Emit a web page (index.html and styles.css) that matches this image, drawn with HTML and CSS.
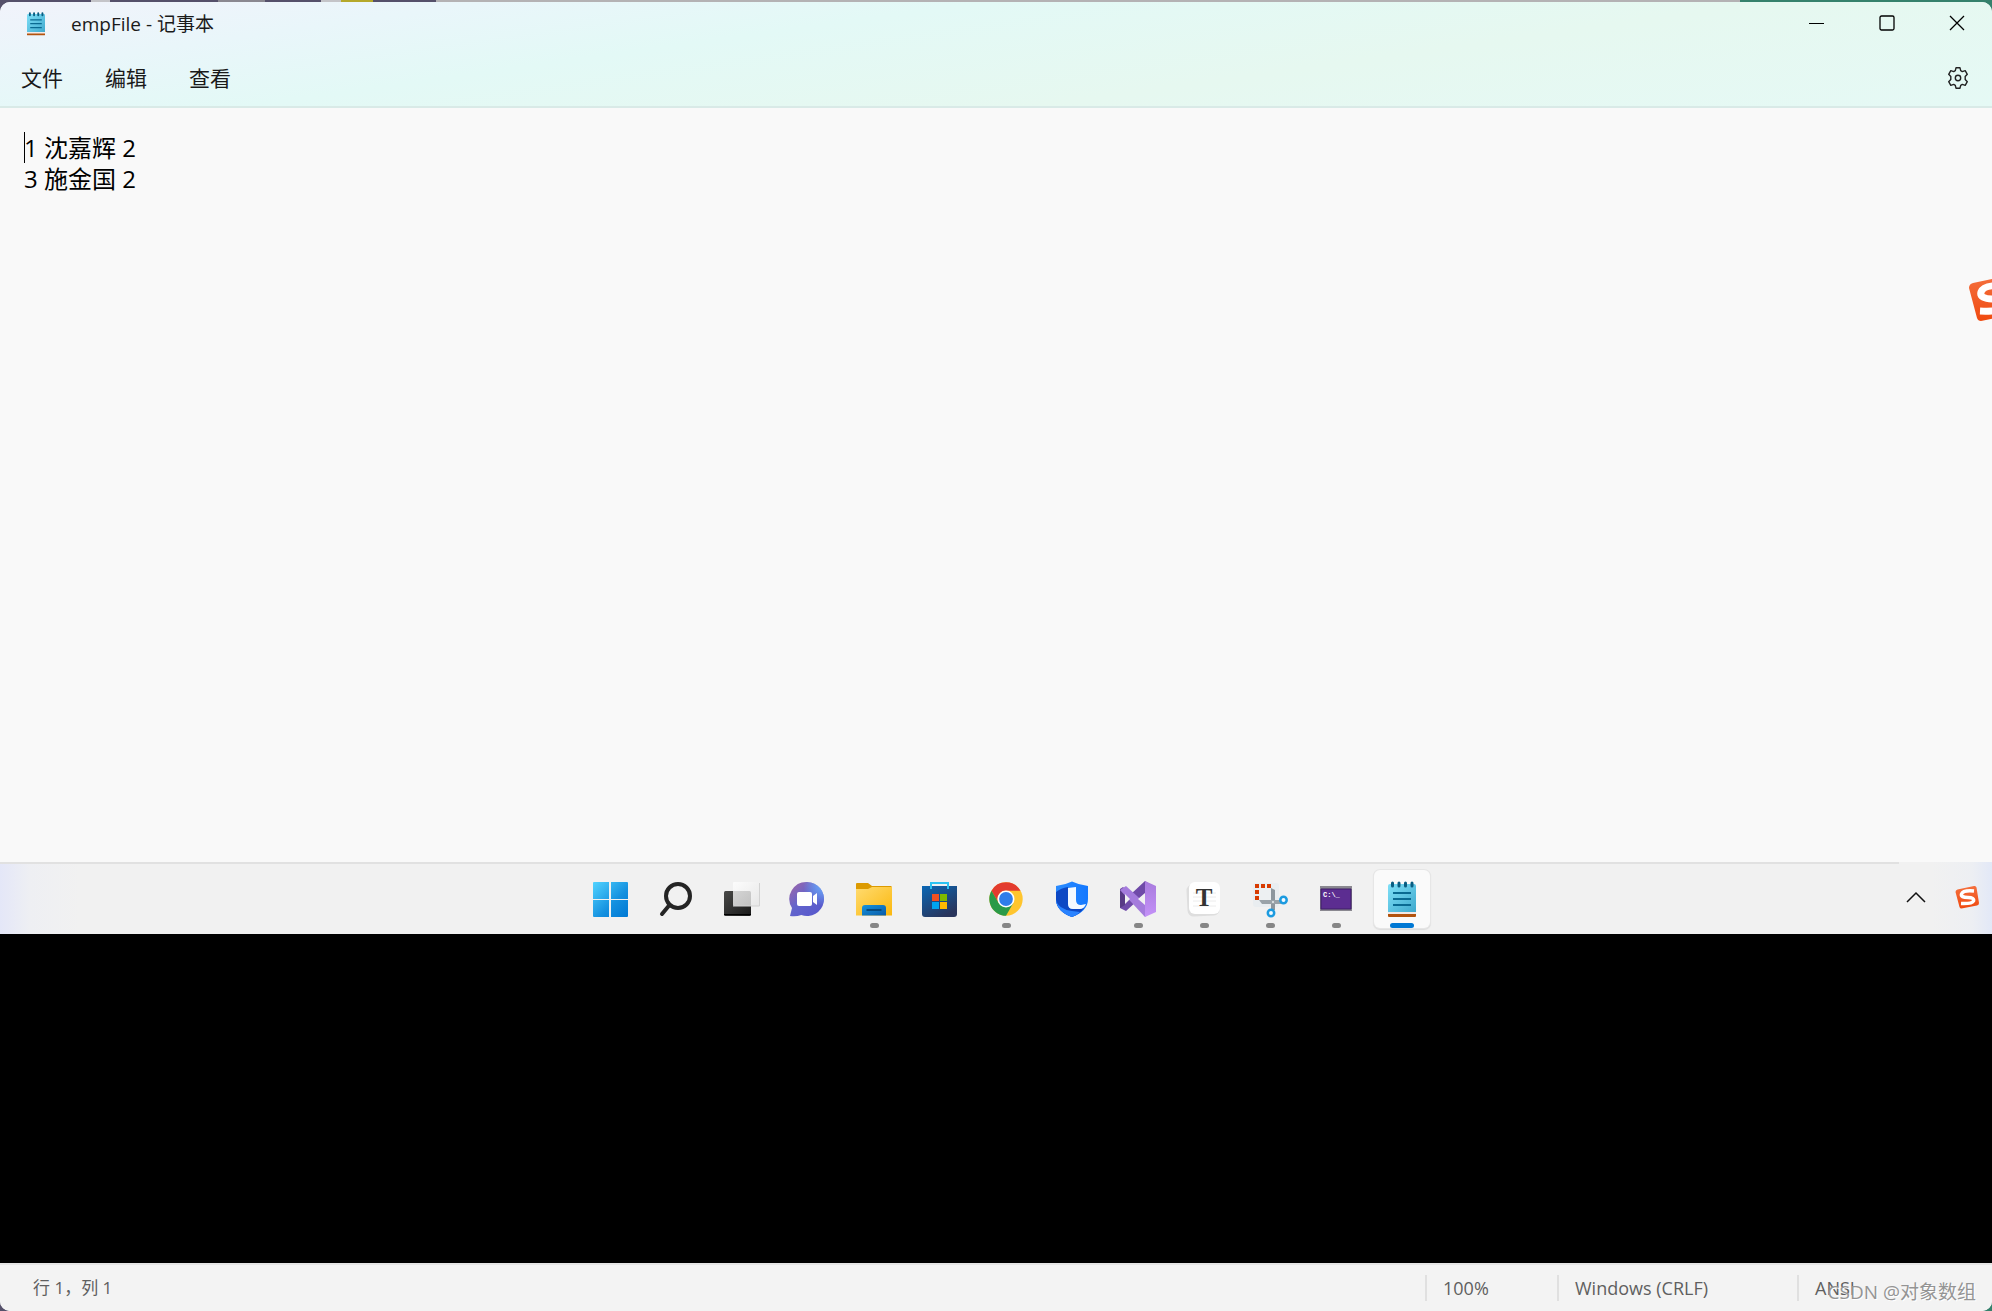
FILE: index.html
```html
<!DOCTYPE html>
<html lang="zh-CN">
<head>
<meta charset="utf-8">
<meta name="viewport" content="width=device-width, initial-scale=1">
<title>empFile - 记事本</title>
<link rel="stylesheet" href="styles.css">
</head>
<body>
<svg class="defs" aria-hidden="true">
  <defs>
    <linearGradient id="win" x1="0" y1="0" x2="1" y2="1"><stop offset="0" stop-color="#51d3ff"/><stop offset=".6" stop-color="#1490df"/><stop offset="1" stop-color="#0078d4"/></linearGradient>
    <linearGradient id="dark" x1="0" y1="0" x2="1" y2="1"><stop offset="0" stop-color="#4a4a48"/><stop offset="1" stop-color="#181818"/></linearGradient>
    <linearGradient id="glass" x1="0" y1="0" x2="1" y2="1"><stop offset="0" stop-color="#fff"/><stop offset="1" stop-color="#e4e4e4"/></linearGradient>
    <linearGradient id="chat" x1="0" y1="0" x2="1" y2="1"><stop offset="0" stop-color="#a467a6"/><stop offset=".45" stop-color="#6264cc"/><stop offset="1" stop-color="#5555cc"/></linearGradient>
    <radialGradient id="chatglow" cx="1" cy=".1" r=".6"><stop offset="0" stop-color="#6bb0ff"/><stop offset="1" stop-color="#6bb0ff" stop-opacity="0"/></radialGradient>
    <linearGradient id="folder" x1="0" y1="0" x2="1" y2="1"><stop offset="0" stop-color="#ffdb70"/><stop offset="1" stop-color="#fbb80e"/></linearGradient>
    <linearGradient id="blue" x1="0" y1="0" x2="1" y2="1"><stop offset="0" stop-color="#1593dd"/><stop offset="1" stop-color="#0a5ba8"/></linearGradient>
    <linearGradient id="bag" x1="0" y1="0" x2=".6" y2="1"><stop offset="0" stop-color="#0a67b5"/><stop offset="1" stop-color="#29355c"/></linearGradient>
    <linearGradient id="shield" x1="0" y1="0" x2="1" y2="0"><stop offset="0" stop-color="#2b8cff"/><stop offset="1" stop-color="#1478ff"/></linearGradient>
    <linearGradient id="vs" x1="0" y1="0" x2="0" y2="1"><stop offset="0" stop-color="#a87bdd"/><stop offset="1" stop-color="#c491f8"/></linearGradient>
    <linearGradient id="pad" x1="0" y1="0" x2="1" y2="1"><stop offset="0" stop-color="#7fe0f8"/><stop offset="1" stop-color="#3fa9cd"/></linearGradient>
    <linearGradient id="orange" x1="0" y1="0" x2="0" y2="1"><stop offset="0" stop-color="#f4703e"/><stop offset="1" stop-color="#f04a10"/></linearGradient>
    <symbol id="notepad" viewBox="0 0 40 40">
      <path d="M6 32h28v5q0 1-1 1H7q-1 0-1-1z" fill="#b3530e"/>
      <path d="M6 31h28v4H6z" fill="#f2e9e6"/>
      <path d="M6 7q0-2 2-2h24q2 0 2 2v26H6z" fill="url(#pad)"/>
      <path d="M11 14h18M11 20h18M11 26h18" stroke="#0a6a92" stroke-width="2"/>
      <path d="M10.500 4v3M17 4v3M23.500 4v3M30 4v3" stroke="#0a5d82" stroke-width="3" stroke-linecap="round"/>
    </symbol>
    <symbol id="sogou" viewBox="0 0 48 48">
      <path d="M5 9L38 2q4-1 5 3l5 31q0 4-4 5l-31 6q-3 0-4-3L1 14q0-4 4-5z" fill="url(#orange)"/>
      <path d="M38 12Q16 10 13 18q-2 7 13 7q13 0 11 7q-3 6-25 5" fill="none" stroke="#fff" stroke-width="7"/>
    </symbol>
  </defs>
</svg>

<div class="backdrop"></div>
<main class="window">
  <header class="chrome">
    <div class="titlebar">
      <svg class="app-icon" viewBox="6 2 28 37" preserveAspectRatio="none" aria-hidden="true"><use href="#notepad" width="40" height="40"/></svg>
      <h1 class="title">empFile - 记事本</h1>
      <div class="controls">
        <button aria-label="最小化"><svg width="16" height="16"><path d="M0 8.500h15" stroke="#000"/></svg></button>
        <button aria-label="最大化"><svg width="16" height="16"><rect x="1" y="1" width="14" height="14" rx="1.500" fill="none" stroke="#000" stroke-width="1.300"/></svg></button>
        <button aria-label="关闭"><svg width="16" height="16"><path d="M1 1l14 14M15 1L1 15" stroke="#000" stroke-width="1.300"/></svg></button>
      </div>
    </div>
    <nav class="menubar">
      <button>文件</button>
      <button>编辑</button>
      <button>查看</button>
      <button class="settings" aria-label="设置">
        <svg width="22" height="22" viewBox="0 0 22 22" fill="none" stroke="#222" stroke-width="1.400" stroke-linejoin="round"><circle cx="11" cy="11" r="2.700"/><path d="M9 .8h4l.7 2.900 1.600.9 2.900-.9 2.100 3.600L18.200 9.500v3l2.100 2.200-2.100 3.600-2.900-.9-1.600.9-.7 2.900H9l-.7-2.900-1.600-.9-2.900.9-2.100-3.600 2.100-2.200v-3L1.700 7.300l2.100-3.600 2.900.9 1.600-.9z"/></svg>
      </button>
    </nav>
  </header>

  <section class="editor">
    <textarea aria-label="文本编辑器" spellcheck="false">1 沈嘉辉 2
3 施金国 2</textarea>
    <span class="caret"></span>
    <svg class="ime-float" aria-hidden="true"><use href="#sogou"/></svg>
  </section>

  <section class="taskbar" aria-label="任务栏">
    <div class="apps">
      <button aria-label="开始"><svg viewBox="0 0 40 40"><path d="M4 3h15v17H3V4q0-1 1-1zM21 3h16q1 0 1 1v16H21zM3 21h16v17H4q-1 0-1-1zM21 21h17v16q0 1-1 1H21z" fill="url(#win)"/></svg></button>
      <button aria-label="搜索"><svg viewBox="0 0 40 40" fill="none" stroke="#242424" stroke-width="4"><circle cx="22" cy="17" r="12"/><path d="M13.500 26L6 35" stroke-linecap="round"/></svg></button>
      <button aria-label="任务视图"><svg viewBox="0 0 40 40"><rect x="2" y="12" width="27" height="25" rx="1.500" fill="url(#dark)"/><path d="M2 35.500h27" stroke="#000"/><rect x="11" y="3" width="27" height="24" rx="1" fill="url(#glass)" opacity=".8"/><path d="M11 27h26.500V4" fill="none" stroke="#d2d2d2"/></svg></button>
      <button aria-label="聊天"><svg viewBox="0 0 40 40"><path d="M19.300 3a17 17 0 1 1-6 33Q8 38 2 37l2-8A17 17 0 0 1 19.300 3z" fill="url(#chat)"/><path d="M19.300 3a17 17 0 1 1-6 33Q8 38 2 37l2-8A17 17 0 0 1 19.300 3z" fill="url(#chatglow)"/><rect x="9" y="13" width="15" height="14" rx="2" fill="#fff"/><path d="M25 17l4-3v12l-4-3z" fill="#fff"/></svg></button>
      <button class="running" aria-label="文件资源管理器"><svg viewBox="0 0 40 40"><path d="M2 5q0-1 1-1h11l4 3h19l1 1v6H2z" fill="#dc9a00"/><path d="M2 10h12l4-2h20v28.500H2z" fill="url(#folder)"/><path d="M8 36.500V29q0-3 3-3h18q3 0 3 3v7.500z" fill="url(#blue)"/><path d="M12.500 31h15" stroke="#064a80" stroke-width="2"/></svg></button>
      <button aria-label="应用商店"><svg viewBox="0 0 40 40"><path d="M2 7h35v28q0 3-3 3H5q-3 0-3-3z" fill="url(#bag)"/><path d="M11 10V4h17v6" fill="none" stroke="#2cc3f2" stroke-width="2"/><path d="M12 15h7v7h-7z" fill="#f25022"/><path d="M20 15h7v7h-7z" fill="#7fba00"/><path d="M12 23h7v7h-7z" fill="#00a4ef"/><path d="M20 23h7v7h-7z" fill="#ffb900"/></svg></button>
      <button class="running" aria-label="Chrome"><svg viewBox="0 0 40 40"><circle cx="20" cy="20" r="16.700" fill="#ffc52e"/><path d="M5.500 11.700A16.700 16.700 0 0 1 34.500 11.700H20A8.300 8.300 0 0 0 12.500 24z" fill="#e33b2e"/><path d="M5.500 11.700A16.700 16.700 0 0 0 20 36.700L27.200 24.200 12.800 24.200z" fill="#2a9a48"/><circle cx="20" cy="20" r="8.500" fill="#fff"/><circle cx="20" cy="20" r="6.900" fill="#2f7de9"/></svg></button>
      <button aria-label="电脑管家"><svg viewBox="0 0 40 40"><path d="M20 2.500Q27 6 36 7v13q0 12-16 18Q4 32 4 20V7q9-1 16-4.500z" fill="url(#shield)"/><path d="M4 13q5-4 12-5v17q0 5 5 5l11-1q-4 6-12 9Q4 32 4 20z" fill="#0d48c4"/><path d="M4 21q2 9 16 11l8 1q-3 3-8 5Q5 33 4 21z" fill="#2a83ff"/><path d="M16 9l8-1v13q0 5 5 5l5-1q-2 5-6 5h-7q-5 0-5-5z" fill="#f4f9ff"/></svg></button>
      <button class="running" aria-label="Visual Studio"><svg viewBox="0 0 40 40"><path d="M2 10l3-2 8 7L27 2l3 2v8L8 32l-6-3z" fill="#6f4aa8"/><path d="M2 10l5 3v13l-5 3z" fill="#583a85"/><path d="M2 11l6-4 22 20v8l-3 3z" fill="#a47bdc"/><path d="M27 2l11 5v26l-11 5z" fill="url(#vs)"/><path d="M27 14v12l-7-6zM7 15v10l5-5z" fill="#f1f1f1"/></svg></button>
      <button class="running" aria-label="Typora"><svg viewBox="0 0 40 40"><rect x="3" y="5" width="32" height="32" rx="6" fill="#dedede" transform="rotate(-3 19 21)"/><rect x="5" y="3" width="31" height="32" rx="6" fill="#fff"/><path d="M9 14h23M9 18h23M9 22h23M9 27h23" stroke="#ececec"/><text class="typora" x="20" y="27" text-anchor="middle">T</text></svg></button>
      <button class="running" aria-label="截图工具"><svg viewBox="0 0 40 40"><rect x="3" y="4" width="26" height="24" rx="3" fill="#e9edf0"/><path d="M21 9l4 2v20h-4z" fill="#8d969d"/><path d="M9 21h22v4H12z" fill="#9aa2a8"/><rect x="9" y="9" width="12" height="12" fill="#edf0f2"/><path d="M5 5h4v4H5zM11 5h4v4h-4zM17 5h4v4h-4zM5 11h4v4H5zM5 17h4v4H5z" fill="#d83b01"/><circle cx="23" cy="23" r="1" fill="#e8ecef"/><g fill="#f4faff" stroke="#1c9be0" stroke-width="2.500"><circle cx="33.500" cy="21" r="3.200"/><circle cx="21" cy="34" r="3.200"/></g></svg></button>
      <button class="running" aria-label="命令提示符"><svg viewBox="0 0 40 40"><path d="M4 7h32v25H4z" fill="#8a8890"/><path d="M5 10h30v20H5z" fill="#5c2d91" stroke="#3e1f66"/><text class="prompt" x="7" y="18">C:\_</text></svg></button>
      <button class="running active" aria-label="记事本"><svg viewBox="0 0 40 40"><use href="#notepad"/></svg></button>
    </div>
    <div class="tray">
      <button aria-label="显示隐藏的图标"><svg width="20" height="12" fill="none" stroke="#111" stroke-width="1.500"><path d="M1 11l9-9 9 9"/></svg></button>
      <button aria-label="输入法"><svg width="24" height="24"><use href="#sogou"/></svg></button>
    </div>
  </section>

  <div class="void"></div>

  <footer class="status">
    <span class="position">行 1，列 1</span>
    <span class="cell zoom">100%</span>
    <span class="cell eol">Windows (CRLF)</span>
    <span class="cell encoding">ANSI</span>
    <span class="watermark">CSDN @对象数组</span>
  </footer>
</main>
</body>
</html>
```
FILE: styles.css
```css
* { box-sizing: border-box; }

body {
  margin: 0;
  min-height: 100vh;
  display: flex;
  flex-direction: column;
  background: linear-gradient(90deg, #55506a 0 87%, #35816c 87%);
  font-family: "Open Sans", "Noto Sans CJK SC", sans-serif;
  color: #1a1a1a;
}

button {
  border: 0;
  padding: 0;
  background: none;
  font: inherit;
  color: inherit;
  display: flex;
  align-items: center;
  justify-content: center;
}

.defs { position: absolute; width: 0; height: 0; }

.backdrop {
  height: 2px;
  background: linear-gradient(90deg,
    #55506a 0 91px, #c4c4c8 91px 110px, #55506a 110px 218px,
    #8a8890 218px 265px, #55506a 265px 321px, #c4c4c8 321px 341px,
    #b5a82a 341px 373px, #55506a 373px 436px, #b4b2b4 436px 1740px,
    #35816c 1740px);
}

.window {
  flex: 1;
  display: flex;
  flex-direction: column;
  border-radius: 10px;
  overflow: hidden;
  background: #f9f9f9;
}

.chrome {
  border-bottom: 2px solid #d9eae7;
  background: linear-gradient(172deg, #f1f3fb 0%, #e9f6fa 18%, #e3f9f6 36%, #e6f8f0 65%, #e5f9f5 100%);
}

.titlebar {
  display: flex;
  align-items: center;
  height: 44px;
  margin-bottom: 4px;
  padding-left: 27px;
}
.app-icon { width: 18px; height: 24px; }
.title {
  margin: 0 0 0 26px;
  font-size: 19px;
  font-weight: 400;
  line-height: 24px;
}
.controls { display: flex; margin-left: auto; align-self: flex-start; }
.controls button { width: 70px; height: 41px; }

.menubar { display: flex; height: 56px; }
.menubar button { padding: 0 21px; font-size: 21px; line-height: 30px; }
.menubar .settings { margin-left: auto; padding: 0 23px; }

.editor { position: relative; flex: 754 1 0; display: flex; overflow: hidden; }
.editor textarea {
  flex: 1;
  border: 0;
  outline: 0;
  resize: none;
  padding: 24px;
  background: transparent;
  font: 24px/31px "Open Sans", "Noto Sans CJK SC", sans-serif;
  color: #000;
}
.caret { position: absolute; left: 24px; top: 24px; width: 1px; height: 31px; background: #000; }
.ime-float { position: absolute; right: -24px; top: 166px; width: 48px; height: 48px; }

.taskbar {
  display: grid;
  grid-template-columns: 1fr auto 1fr;
  align-items: center;
  height: 72px;
  padding-top: 2px;
  background:
    linear-gradient(#e1e1e1, #e1e1e1) 0 0 / calc(100% - 93px) 2px no-repeat,
    linear-gradient(90deg, #e4e7f8 0, #eeeff3 30px, #f1f1f1 80px calc(100% - 60px), #edeff3 calc(100% - 20px), #e2e8f7 100%);
}
.apps { grid-column: 2; display: flex; gap: 10px; margin-left: 20px; }
.apps button { position: relative; width: 56px; height: 58px; border-radius: 6px; }
.apps svg { width: 40px; height: 40px; }
.apps .active { background: #fafafa; box-shadow: 0 0 0 1px #e6e6e6, 0 1px 1px 1px #dcdcdc; }
.apps .running::after {
  content: "";
  position: absolute;
  bottom: 0;
  left: 24px;
  width: 9px;
  height: 5px;
  border-radius: 3px;
  background: #868686;
}
.apps .active::after { left: 16px; width: 24px; background: #0078d4; }
.typora { font: 700 25px "Liberation Serif", serif; fill: #333; }
.prompt { font: 700 7px "Liberation Mono", monospace; fill: #fff; }

.tray { grid-column: 3; justify-self: end; display: flex; gap: 29px; padding: 0 13px 4px 0; }

.void { flex: 329 1 0; background: #000; }

.status {
  position: relative;
  display: flex;
  align-items: center;
  height: 48px;
  padding-left: 33px;
  border-top: 2px solid #e5e5e5;
  background: #f3f3f3;
  font-size: 18px;
  line-height: 26px;
  color: #5f5f5f;
}
.position { flex: 1; font-size: 17px; }
.cell { border-left: 2px solid #e0e0e0; padding-left: 16px; }
.zoom { width: 132px; }
.eol { width: 240px; }
.encoding { width: 195px; }
.watermark {
  position: absolute;
  right: 16px;
  bottom: 6px;
  font-size: 19px;
  color: #949494;
  text-shadow: 1px 1px 0 #fff;
}
```
